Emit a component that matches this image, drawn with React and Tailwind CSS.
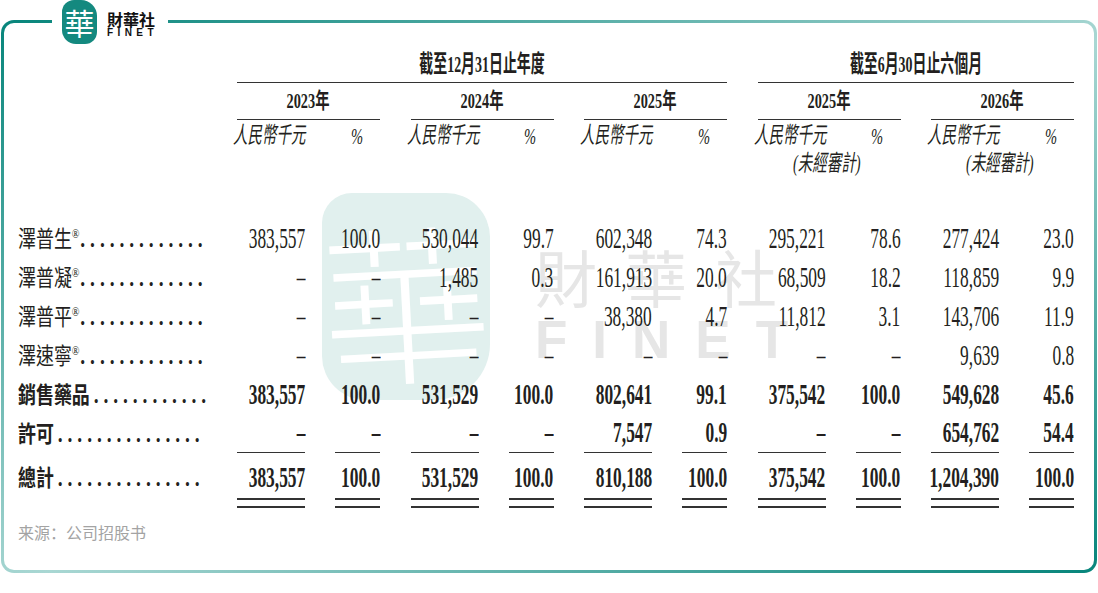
import React from "react";

const serif = "font-['Liberation_Serif','Noto_Sans_CJK_TC',serif]";

const rows = [
  { label: "澤普生", reg: true, dots: 13, vals: ["383,557", "100.0", "530,044", "99.7", "602,348", "74.3", "295,221", "78.6", "277,424", "23.0"] },
  { label: "澤普凝", reg: true, dots: 13, vals: ["–", "–", "1,485", "0.3", "161,913", "20.0", "68,509", "18.2", "118,859", "9.9"] },
  { label: "澤普平", reg: true, dots: 13, vals: ["–", "–", "–", "–", "38,380", "4.7", "11,812", "3.1", "143,706", "11.9"] },
  { label: "澤速寧", reg: true, dots: 13, vals: ["–", "–", "–", "–", "–", "–", "–", "–", "9,639", "0.8"] },
  { label: "銷售藥品", bold: true, gap: true, dots: 12, vals: ["383,557", "100.0", "531,529", "100.0", "802,641", "99.1", "375,542", "100.0", "549,628", "45.6"] },
  { label: "許可", bold: true, gap: true, dots: 15, under: true, vals: ["–", "–", "–", "–", "7,547", "0.9", "–", "–", "654,762", "54.4"] },
];

const totals = ["383,557", "100.0", "531,529", "100.0", "810,188", "100.0", "375,542", "100.0", "1,204,390", "100.0"];

const years = ["2023年", "2024年", "2025年", "2025年", "2026年"];

const Num = ({ v, bold }) => (
  <span
    className={
      "inline-block origin-right scale-x-[0.6] whitespace-nowrap text-[29px] leading-none " +
      (bold ? "font-bold" : "")
    }
  >
    {v}
  </span>
);

const Label = ({ row, bold, dots }) => (
  <div className="w-[233px] shrink-0 pl-[14px] flex items-center">
    <span
      className={
        "inline-block origin-left scale-x-[0.78] whitespace-nowrap text-[23px] leading-none " +
        (bold ? "font-bold" : "")
      }
    >
      {row.label}
      {row.reg && <span className="text-[13px] align-[9px] font-normal">®</span>}
      <span className={"text-[25px] tracking-[6.3px] font-bold " + (row.gap ? "ml-[5px]" : "ml-[1px]")}>
        {".".repeat(dots)}
      </span>
    </span>
  </div>
);

const Logo = () => (
  <div className="absolute left-[52px] top-0 w-[116px] h-[45px] bg-white flex items-start gap-[10px] pl-[10px]">
    <div className="w-[35px] h-[44px] rounded-[12px] rounded-tr-[16px] rounded-bl-[14px] bg-[#14897f] flex items-center justify-center">
      <span className="text-white text-[30px] leading-none font-['Noto_Sans_CJK_TC',sans-serif]">華</span>
    </div>
    <div className="pt-[11px] flex flex-col">
      <span className="text-[16px] font-bold leading-[17px] text-[#111] font-['Noto_Sans_CJK_TC',sans-serif]">財華社</span>
      <span className="text-[10px] font-bold leading-[10px] tracking-[4.4px] text-[#111] font-['Liberation_Sans',sans-serif]">FINET</span>
    </div>
  </div>
);

const Watermark = () => (
  <>
    <div className="absolute left-[318px] top-[170px] w-[168px] h-[207px] rounded-[44px] rounded-tl-[30px] rounded-br-[56px] bg-[#e1f0ee] flex items-center justify-center overflow-hidden">
      <span className="text-white text-[170px] font-light leading-none font-['Noto_Sans_CJK_TC',sans-serif] -rotate-3 inline-block">華</span>
    </div>
    <div className="absolute left-[531px] top-[222px] flex flex-col text-[#e6e6e6]">
      <span className="text-[62px] leading-none tracking-[28px] font-['Noto_Sans_CJK_TC',sans-serif]">財華社</span>
      <span className="mt-[6px] text-[53px] font-bold leading-none tracking-[25px] font-['Liberation_Sans',sans-serif]">FINET</span>
    </div>
  </>
);

export default function App() {
  return (
    <div className={"relative w-[1098px] h-[593px] pt-[20px] bg-white text-[#231f20] " + serif}>
      <div className="ml-[1px] w-[1096px] h-[553px] rounded-[13px] p-[3px] bg-[linear-gradient(to_bottom_right,#07857b_0%,#a9d7d3_52%,#07857b_100%)]">
        <div className="relative w-full h-full bg-white rounded-[10px] pt-[23px]">
          <Watermark />

          <div className="relative">
            {/* period headers */}
            <div className="flex">
              <div className="w-[233px] shrink-0" />
              <div className="flex gap-[30.5px]">
                <div className="w-[490px] h-[37px] border-b-[1.5px] border-[#333] flex items-center justify-center">
                  <span className="inline-block scale-x-[0.58] whitespace-nowrap text-[24px] font-bold leading-none">截至12月31日止年度</span>
                </div>
                <div className="w-[316.5px] h-[37px] border-b-[1.5px] border-[#333] flex items-center justify-center">
                  <span className="inline-block scale-x-[0.58] whitespace-nowrap text-[24px] font-bold leading-none">截至6月30日止六個月</span>
                </div>
              </div>
            </div>

            {/* years */}
            <div className="flex">
              <div className="w-[233px] shrink-0" />
              <div className="flex gap-[30.5px]">
                {years.map((y, i) => (
                  <div key={i} className="w-[143px] h-[37px] border-b-[1.5px] border-[#333] flex items-center justify-center">
                    <span className="inline-block scale-x-[0.65] whitespace-nowrap text-[22px] font-bold leading-none">{y}</span>
                  </div>
                ))}
              </div>
            </div>

            {/* units */}
            <div className="flex pt-[3px] h-[98.5px]">
              <div className="w-[233px] shrink-0" />
              <div className="flex gap-[30.5px]">
                {years.map((y, i) => (
                  <div key={i} className="w-[143px] flex flex-col">
                    <div className="flex h-[27px] items-center">
                      <div className="w-[98px] -ml-[4px] shrink-0">
                        <span className="inline-block origin-left scale-x-[0.63] whitespace-nowrap text-[23px] italic leading-none">人民幣千元</span>
                      </div>
                      <div className="w-[49px] flex justify-end pr-[17px]">
                        <span className="inline-block origin-right scale-x-[0.63] text-[23px] italic leading-none">%</span>
                      </div>
                    </div>
                    {i > 2 && (
                      <div className="h-[27px] flex items-center pl-[35px]">
                        <span className="inline-block origin-left scale-x-[0.63] whitespace-nowrap text-[23px] italic leading-none">(未經審計)</span>
                      </div>
                    )}
                  </div>
                ))}
              </div>
            </div>

            {/* body rows */}
            {rows.map((row, r) => (
              <div key={r} className="flex h-[39px]">
                <Label row={row} bold={row.bold} dots={row.dots} />
                <div className="flex gap-[30.5px]">
                  {[0, 1, 2, 3, 4].map((g) => (
                    <div key={g} className="w-[143px] flex">
                      <div className={"w-[68px] flex items-center justify-end " + (row.under ? "border-b-[1.5px] border-[#333]" : "")}>
                        <Num v={row.vals[g * 2]} bold={row.bold} />
                      </div>
                      <div className={"ml-[30px] w-[45px] flex items-center justify-end " + (row.under ? "border-b-[1.5px] border-[#333]" : "")}>
                        <Num v={row.vals[g * 2 + 1]} bold={row.bold} />
                      </div>
                    </div>
                  ))}
                </div>
              </div>
            ))}

            {/* total */}
            <div className="flex mt-[3.5px]">
              <div className="h-[42px] flex">
                <Label row={{ label: "總計", gap: true }} bold dots={15} />
              </div>
              <div className="flex gap-[30.5px]">
                {[0, 1, 2, 3, 4].map((g) => (
                  <div key={g} className="w-[143px] flex">
                    <div className="w-[68px] flex flex-col">
                      <div className="h-[42px] flex items-center justify-end">
                        <Num v={totals[g * 2]} bold />
                      </div>
                      <div className="h-[10px] border-y-2 border-[#333]" />
                    </div>
                    <div className="ml-[30px] w-[45px] flex flex-col">
                      <div className="h-[42px] flex items-center justify-end">
                        <Num v={totals[g * 2 + 1]} bold />
                      </div>
                      <div className="h-[10px] border-y-2 border-[#333]" />
                    </div>
                  </div>
                ))}
              </div>
            </div>

            <div className="mt-[13.5px] pl-[14px] text-[16px] leading-[20px] text-[#a3a3a3] font-['Noto_Sans_CJK_SC',sans-serif]">
              来源：公司招股书
            </div>
          </div>
        </div>
      </div>
      <Logo />
    </div>
  );
}
